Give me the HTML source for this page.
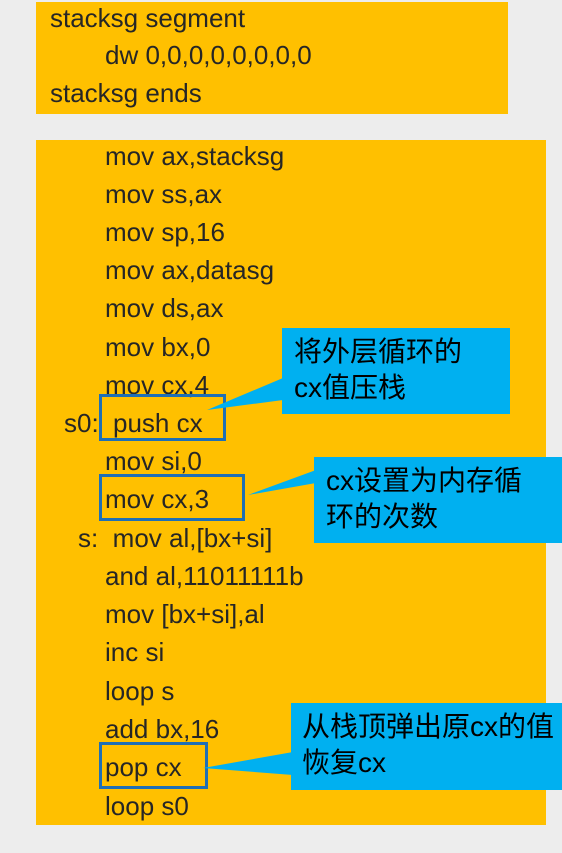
<!DOCTYPE html>
<html><head><meta charset="utf-8"><style>
html,body{margin:0;padding:0;}
body{width:562px;height:853px;background:#ededed;position:relative;overflow:hidden;font-family:"Liberation Sans","Noto Sans CJK SC",sans-serif;color:#262626;}
.y{position:absolute;background:#ffc000;}
.t{position:absolute;font-size:26px;line-height:30px;white-space:nowrap;letter-spacing:0px;}
.b{position:absolute;border:3px solid #1f6fb5;box-sizing:border-box;}
.c{position:absolute;background:#00b0f0;color:#000;font-size:28px;line-height:36px;box-sizing:border-box;padding:6px 0 0 12px;white-space:nowrap;overflow:hidden;}
svg{position:absolute;left:0;top:0;}
</style></head><body>
<div class="y" style="left:36px;top:2px;width:472px;height:112px"></div>
<div class="y" style="left:36px;top:140px;width:510px;height:685px"></div>

<div class="t" style="left:50px;top:3px">stacksg segment</div>
<div class="t" style="left:105px;top:40px">dw 0,0,0,0,0,0,0,0</div>
<div class="t" style="left:50px;top:78px">stacksg ends</div>

<div class="t" style="left:105px;top:141px">mov ax,stacksg</div>
<div class="t" style="left:105px;top:179px">mov ss,ax</div>
<div class="t" style="left:105px;top:217px">mov sp,16</div>
<div class="t" style="left:105px;top:255px">mov ax,datasg</div>
<div class="t" style="left:105px;top:293px">mov ds,ax</div>
<div class="t" style="left:105px;top:332px">mov bx,0</div>
<div class="t" style="left:105px;top:370px">mov cx,4</div>
<div class="t" style="left:64px;top:408px">s0:</div>
<div class="t" style="left:113px;top:408px">push cx</div>
<div class="t" style="left:105px;top:446px">mov si,0</div>
<div class="t" style="left:105px;top:484px">mov cx,3</div>
<div class="t" style="left:78px;top:523px">s:&nbsp; mov al,[bx+si]</div>
<div class="t" style="left:105px;top:561px">and al,11011111b</div>
<div class="t" style="left:105px;top:599px">mov [bx+si],al</div>
<div class="t" style="left:105px;top:637px">inc si</div>
<div class="t" style="left:105px;top:676px">loop s</div>
<div class="t" style="left:105px;top:714px">add bx,16</div>
<div class="t" style="left:105px;top:752px">pop cx</div>
<div class="t" style="left:105px;top:791px">loop s0</div>

<div class="b" style="left:99px;top:394px;width:127px;height:47px"></div>
<div class="b" style="left:99px;top:474px;width:146px;height:47px"></div>
<div class="b" style="left:99px;top:742px;width:109px;height:47px"></div>

<svg width="562" height="853">
<polygon points="283,378 207,410 283,400" fill="#00b0f0"/>
<polygon points="316,470 248,495 316,483" fill="#00b0f0"/>
<polygon points="293,752 203,768 293,775" fill="#00b0f0"/>
</svg>

<div class="c" style="left:282px;top:328px;width:228px;height:86px">将外层循环的<br>cx值压栈</div>
<div class="c" style="left:314px;top:457px;width:248px;height:86px">cx设置为内存循<br>环的次数</div>
<div class="c" style="left:291px;top:703px;width:271px;height:87px;padding-left:11px">从栈顶弹出原cx的值<br>恢复cx</div>
</body></html>
